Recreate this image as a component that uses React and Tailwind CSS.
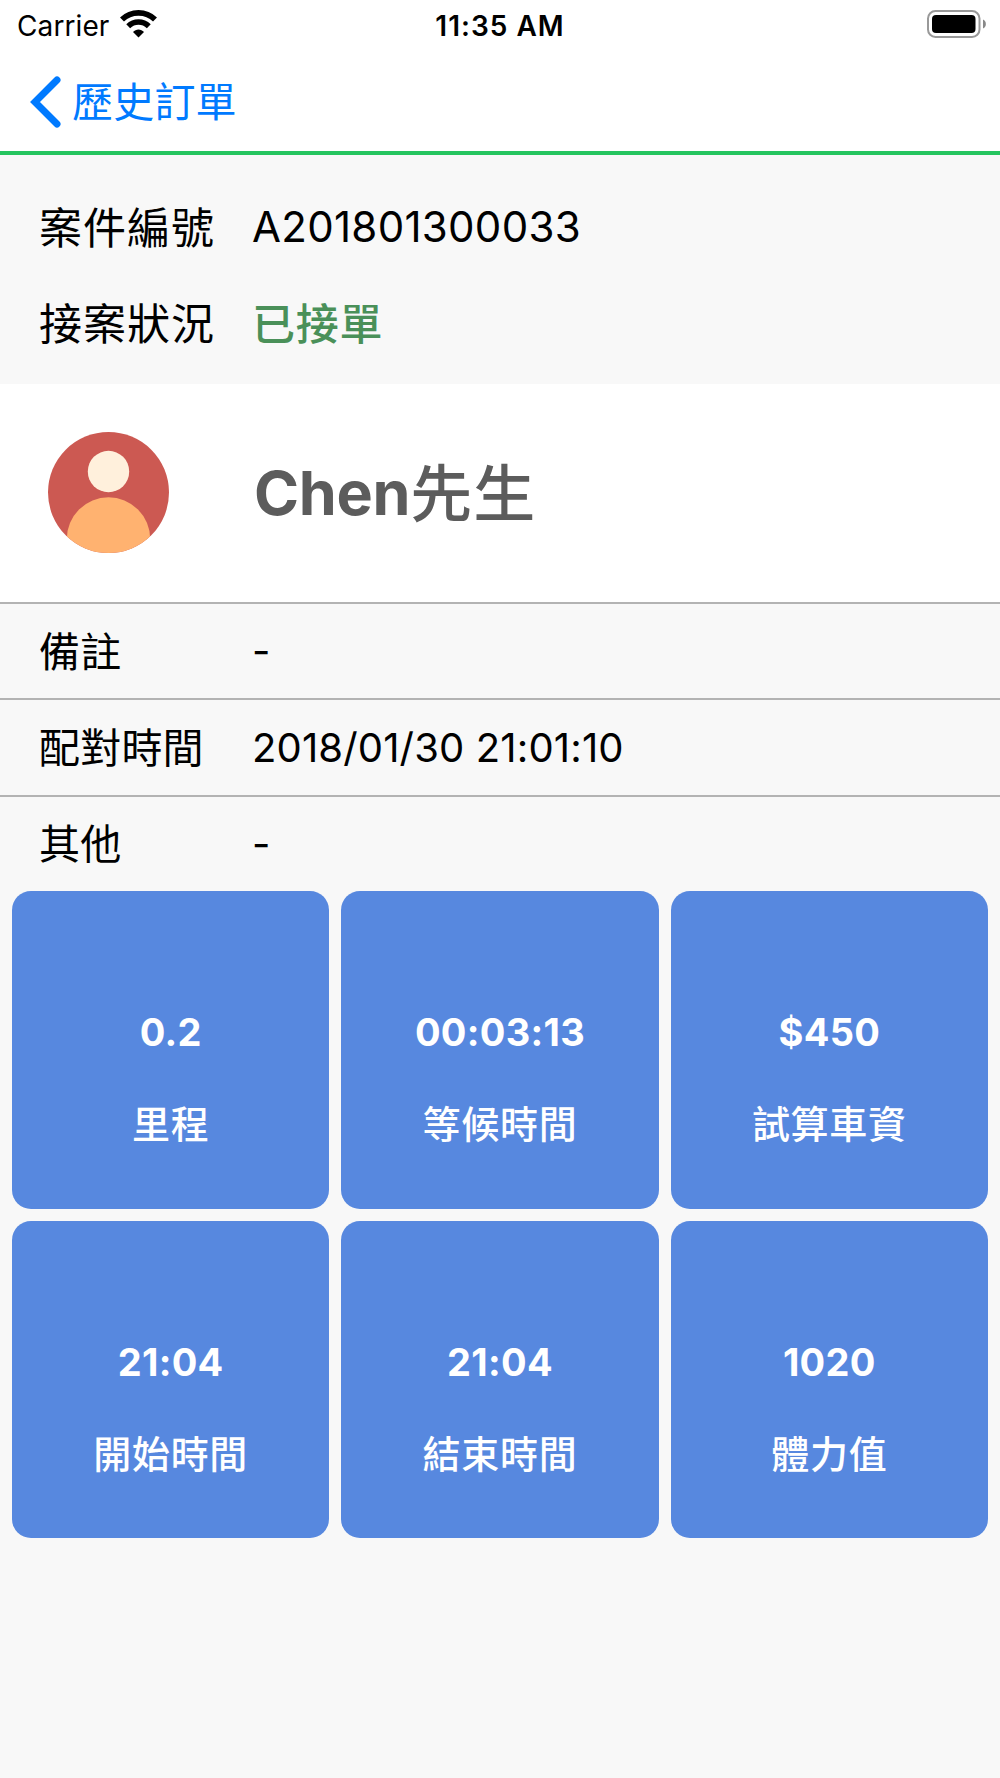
import React from "react";

const rows = [
  { label: "備註", value: "-" },
  { label: "配對時間", value: "2018/01/30 21:01:10" },
  { label: "其他", value: "-" },
];

const stats = [
  { value: "0.2", label: "里程" },
  { value: "00:03:13", label: "等候時間" },
  { value: "$450", label: "試算車資" },
  { value: "21:04", label: "開始時間" },
  { value: "21:04", label: "結束時間" },
  { value: "1020", label: "體力值" },
];

function WifiIcon() {
  return (
    <svg className="mb-[3px] ml-[11px] h-7 w-[37px]" viewBox="0 0 37 28" fill="none">
      <path d="M2 9.6C11 0.6 26 0.6 35 9.6" stroke="black" strokeWidth="5.6" />
      <path d="M8.2 16.2C14 10.6 23 10.6 28.8 16.2" stroke="black" strokeWidth="5.6" />
      <path d="M18.5 27.5L13 22C16 18.6 21 18.6 24 22Z" fill="black" />
    </svg>
  );
}

function BatteryIcon() {
  return (
    <svg className="mb-[3px] h-7 w-[60px]" viewBox="0 0 60 28" fill="none">
      <rect x="1" y="1" width="51.5" height="26" rx="7.5" stroke="#999999" strokeWidth="2" />
      <rect x="5" y="5" width="43.5" height="18" rx="4" fill="black" />
      <path d="M56 9.5C59.8 11 59.8 17 56 18.5Z" fill="#888888" />
    </svg>
  );
}

function StatusBar() {
  return (
    <div className="grid h-[51px] grid-cols-3 items-center pl-[15px] pr-[13px]">
      <div className="flex items-center pl-[2px]">
        <span className="text-[28px] leading-none tracking-[0.1px]">Carrier</span>
        <WifiIcon />
      </div>
      <div className="pr-[2px] text-center text-[28px] font-semibold leading-none tracking-[1px]">
        11:35 AM
      </div>
      <div className="flex justify-end">
        <BatteryIcon />
      </div>
    </div>
  );
}

function NavBar() {
  return (
    <header className="flex h-[104px] items-center border-b-[4px] border-[#25c55f] pl-[30px] pt-[2px] text-[#007aff]">
      <svg className="h-[52px] w-[32px]" viewBox="0 0 32 52" fill="none">
        <path
          d="M27 4L5 26L27 48"
          stroke="currentColor"
          strokeWidth="7"
          strokeLinecap="round"
          strokeLinejoin="miter"
        />
      </svg>
      <span className="ml-[10px] text-[41px] font-normal leading-none tracking-[0.2px]">
        歷史訂單
      </span>
    </header>
  );
}

function Avatar() {
  return (
    <svg className="mb-px ml-12 h-[121px] w-[121px] shrink-0" viewBox="0 0 121 121">
      <defs>
        <clipPath id="avatar">
          <circle cx="60.5" cy="60.5" r="60.5" />
        </clipPath>
      </defs>
      <g clipPath="url(#avatar)">
        <rect width="121" height="121" fill="#cc5952" />
        <circle cx="60.5" cy="39.5" r="20.7" fill="#fff0dc" />
        <circle cx="60.5" cy="107" r="41.7" fill="#ffb270" />
      </g>
    </svg>
  );
}

function StatCard({ value, label }) {
  return (
    <div className="flex h-[317.5px] flex-col items-center rounded-[19px] bg-[#5788df] pt-[121px] text-white">
      <div className="text-[38px] font-bold leading-10 tracking-[0.3px]">{value}</div>
      <div className="mt-[52px] text-[38px] font-medium leading-10 tracking-[0.7px]">{label}</div>
    </div>
  );
}

function App() {
  return (
    <div className="min-h-[1778px] w-[1000px] bg-[#f8f8f8] font-['Inter','Noto_Sans_CJK_TC',sans-serif] text-black">
      <div className="bg-white">
        <StatusBar />
        <NavBar />
      </div>

      <section className="h-[229px] pl-[39px] pt-6 text-[42px] leading-none">
        <div className="flex h-24 items-center">
          <span className="w-[213px] pt-[3px] text-[43px] tracking-[1px]">案件編號</span>
          <span className="tracking-[0.3px]">A201801300033</span>
        </div>
        <div className="flex h-24 items-center">
          <span className="w-[213px] pt-[3px] text-[43px] tracking-[1px]">接案狀況</span>
          <span className="pt-[3px] text-[43px] font-medium tracking-[0.8px] text-[#4a9059]">
            已接單
          </span>
        </div>
      </section>

      <section className="flex h-[218px] items-center bg-white text-[#5c5c5c]">
        <Avatar />
        <div className="ml-[85px] flex items-center text-[61px] leading-none">
          <span className="font-bold tracking-[-0.3px]">Chen</span>
          <span className="pt-[4px] text-[62px] font-medium tracking-[1px]">先生</span>
        </div>
      </section>

      <section className="text-[40px] leading-none">
        {rows.map((row) => (
          <div
            key={row.label}
            className="flex h-[96.4px] items-center border-t-2 border-[#b3b3b3] pl-[39px]"
          >
            <span className="w-[213px] pt-[2px] text-[41px] tracking-[0.2px]">{row.label}</span>
            <span className="tracking-[0.15px]">{row.value}</span>
          </div>
        ))}
      </section>

      <section className="grid grid-cols-3 gap-3 px-3">
        {stats.map((stat) => (
          <StatCard key={stat.label} value={stat.value} label={stat.label} />
        ))}
      </section>
    </div>
  );
}

export default App;
